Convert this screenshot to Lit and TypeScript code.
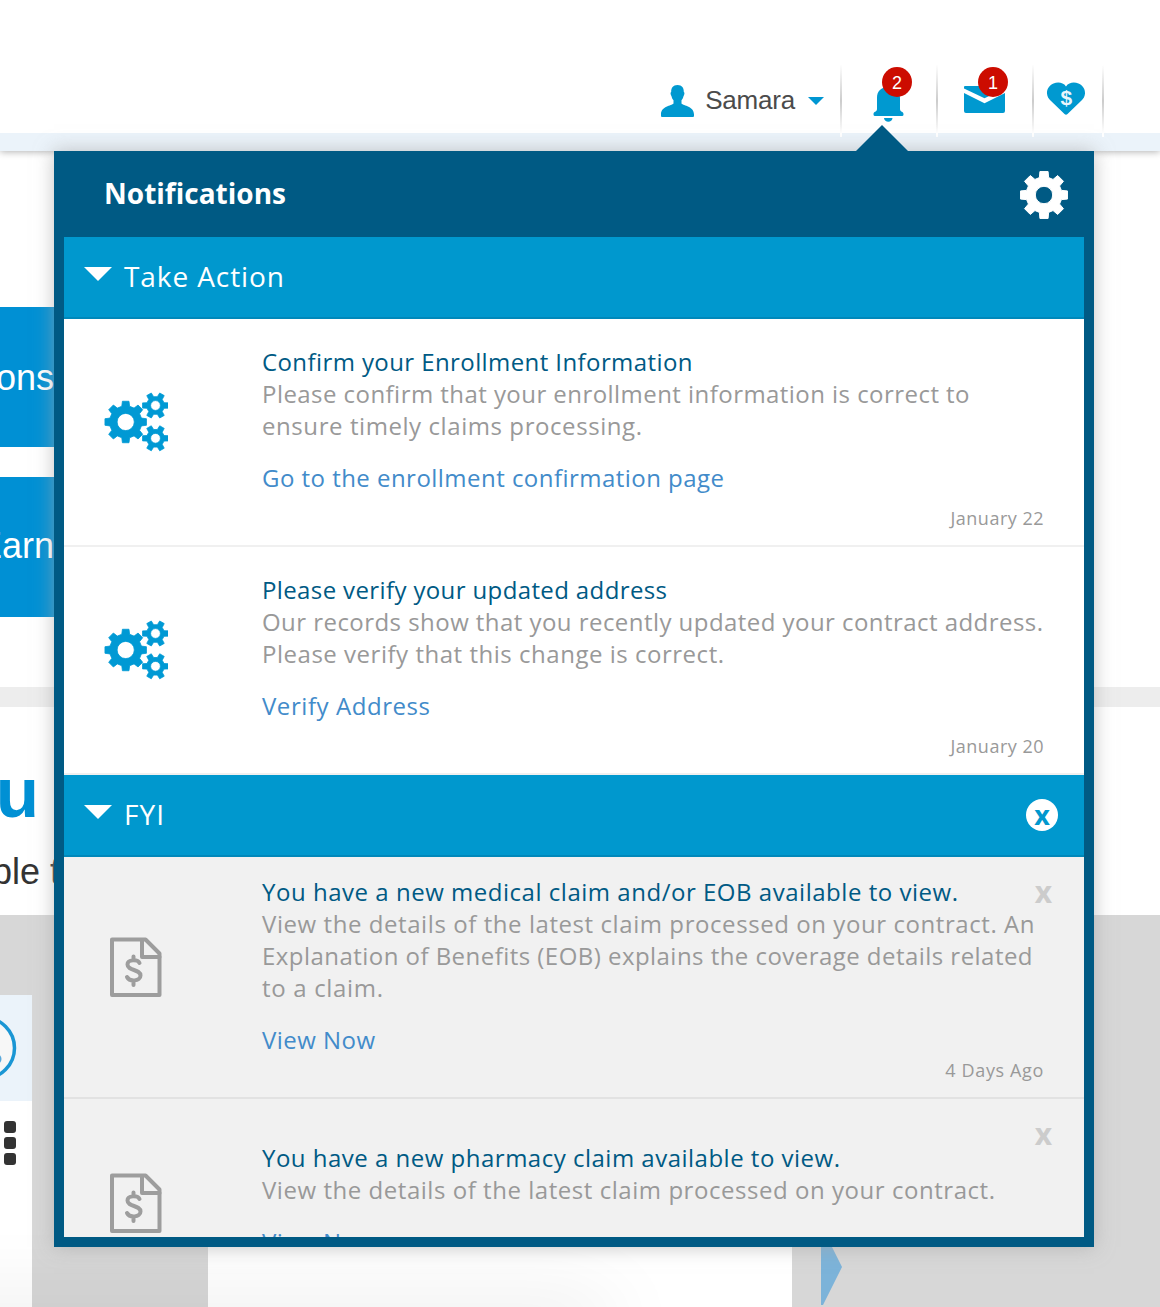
import { LitElement, html, css } from "lit";
import { customElement, property } from "lit/decorators.js";
import { styleMap } from "lit/directives/style-map.js";

const SANS = '"Open Sans", "Noto Sans", sans-serif';

const measurer = document.createElement("canvas").getContext("2d")!;

/** Letter spacing that makes `text` set in `font` as wide as `width`. */
function tracking(text: string, font: string, width: number) {
  measurer.font = font;
  const natural = measurer.measureText(text).width;
  return `${((width - natural) / (text.length - 1)).toFixed(3)}px`;
}

/** A gear outline with a round hole, drawn with the even-odd rule. */
function gear(cx: number, cy: number, outer: number, root: number, hole: number, teeth: number, tip = 0.24, base = 0.3) {
  const pts: string[] = [];
  const step = (Math.PI * 2) / teeth;
  const at = (r: number, a: number) => `${(cx + r * Math.cos(a)).toFixed(2)} ${(cy + r * Math.sin(a)).toFixed(2)}`;
  for (let i = 0; i < teeth; i++) {
    const a = i * step;
    pts.push(at(root, a - base * step), at(outer, a - tip * step), at(outer, a + tip * step), at(root, a + base * step));
  }
  return `M${pts.join("L")}ZM${cx - hole} ${cy}a${hole} ${hole} 0 1 0 ${hole * 2} 0a${hole} ${hole} 0 1 0 ${-hole * 2} 0Z`;
}

type Line = [text: string, width: number];

interface Notice {
  icon: "gears" | "claim";
  title: Line;
  body: Line[];
  link: Line;
  date: Line;
  variant: string;
  dismiss: boolean;
}

const ACTIONS: Notice[] = [
  {
    icon: "gears",
    title: ["Confirm your Enrollment Information", 430.5],
    body: [
      ["Please confirm that your enrollment information is correct to", 707.5],
      ["ensure timely claims processing.", 380],
    ],
    link: ["Go to the enrollment confirmation page", 462],
    date: ["January 22", 93],
    variant: "action",
    dismiss: false,
  },
  {
    icon: "gears",
    title: ["Please verify your updated address", 405],
    body: [
      ["Our records show that you recently updated your contract address.", 781],
      ["Please verify that this change is correct.", 462],
    ],
    link: ["Verify Address", 168],
    date: ["January 20", 93],
    variant: "action",
    dismiss: false,
  },
];

const FYI: Notice[] = [
  {
    icon: "claim",
    title: ["You have a new medical claim and/or EOB available to view.", 696],
    body: [
      ["View the details of the latest claim processed on your contract. An", 772.5],
      ["Explanation of Benefits (EOB) explains the coverage details related", 770.5],
      ["to a claim.", 121],
    ],
    link: ["View Now", 113],
    date: ["4 Days Ago", 98],
    variant: "fyi",
    dismiss: true,
  },
  {
    icon: "claim",
    title: ["You have a new pharmacy claim available to view.", 578],
    body: [["View the details of the latest claim processed on your contract.", 733]],
    link: ["View Now", 113],
    date: ["5 Days Ago", 98],
    variant: "fyi last",
    dismiss: true,
  },
];

@customElement("notice-item")
class NoticeItem extends LitElement {
  @property({ attribute: false }) notice!: Notice;

  static styles = css`
    :host { display: block; }
    .item {
      box-sizing: border-box;
      position: relative;
      display: grid;
      grid-template-columns: 198px 1fr;
      font-family: "Open Sans", "Noto Sans", sans-serif;
      font-size: 24px;
      line-height: 32px;
      border-bottom: 2px solid #f0f0f0;
    }
    .action { height: 228px; padding-top: 27px; background: #fff; }
    .fyi { height: 242px; padding-top: 19px; background: #f1f1f1; border-color: #e2e2e2; }
    .last { padding-top: 43px; }
    .icon { padding: 44px 0 0 38px; }
    .fyi .icon { padding: 60px 0 0 44px; }
    .last .icon { padding-top: 30px; }
    svg { display: block; }
    .line { white-space: nowrap; }
    .title { color: #005a84; }
    .body { color: #999; }
    .link { color: #428bca; margin-top: 20px; }
    .date { color: #999; font-size: 18px; line-height: 24px; margin-top: 12px; padding-right: 40px; text-align: right; white-space: nowrap; }
    .fyi .date { margin-top: 2px; }
    .close { position: absolute; top: 19px; right: 32px; color: #ccc; font-weight: 700; font-size: 30px; }
  `;

  private line([text, width]: Line, cls: string) {
    return html`<div class="line ${cls}" style=${styleMap({ letterSpacing: tracking(text, `24px ${SANS}`, width) })}>${text}</div>`;
  }

  private icon() {
    if (this.notice.icon === "gears") {
      return html`<svg width="66" height="64" viewBox="102 390 66 64">
        <g fill="#0099d4" fill-rule="evenodd" stroke="#0099d4" stroke-width="0.8" stroke-linejoin="round">
          <path d=${gear(125.7, 422, 21, 16.2, 8.6, 8, 0.2, 0.31)} />
          <path d=${gear(155.5, 405.5, 13.2, 9, 4.9, 6, 0.19, 0.3)} />
          <path d=${gear(155.5, 438.3, 13.2, 9, 4.9, 6, 0.19, 0.3)} />
        </g>
      </svg>`;
    }
    return html`<svg width="56" height="62" viewBox="108 936 56 62" fill="none" stroke="#9d9d9d" stroke-width="4" stroke-linejoin="round" stroke-linecap="round">
      <path d="M112 939.5h33.500l14 14V995H112Z" />
      <path d="M142 940v17h17.500" />
      <path d="M139.500 963c-1.500-3.500-12-4-12 1.500c0 6.500 13 4.500 13 11c0 6-11 6.500-13.500 1.500M133.500 956.500v3.500M133.500 981.500v3.500" />
    </svg>`;
  }

  render() {
    const n = this.notice;
    return html`<div class="item ${n.variant}">
      <div class="icon">${this.icon()}</div>
      <div>
        ${this.line(n.title, "title")}
        ${n.body.map((l) => this.line(l, "body"))}
        ${this.line(n.link, "link")}
        <div class="date" style=${styleMap({ letterSpacing: tracking(n.date[0], `18px ${SANS}`, n.date[1]) })}>${n.date[0]}</div>
      </div>
      ${n.dismiss ? html`<span class="close">x</span>` : ""}
    </div>`;
  }
}

@customElement("app-root")
class AppRoot extends LitElement {
  static styles = css`
    :host { display: block; }
    * { box-sizing: border-box; }
    .page {
      position: relative;
      height: 1307px;
      overflow: hidden;
      background: #fff;
      font-family: "Liberation Sans", Arial, sans-serif;
    }
    svg { display: block; }

    .top { height: 151px; background: linear-gradient(#fff 133px, #ebf3fa 133px); box-shadow: 0 1px 7px rgba(0, 0, 0, 0.3); padding: 65px 56px 0 0; display: flex; justify-content: flex-end; }
    .user { display: flex; height: 71px; align-items: center; }
    .name { font-size: 26px; letter-spacing: -0.2px; color: #4b4b4b; margin: 0 13px 0 11px; }
    .caret { border: 8px solid transparent; border-top-color: #0096d2; border-bottom: 0; margin-right: 16px; }
    .cell { position: relative; height: 72px; border-left: 2px solid; border-image: linear-gradient(#fff, #ccc 50%, #fff 94%) 1; }
    .end { height: 72px; width: 2px; background: linear-gradient(#fff, #ccc 50%, #fff 94%); }
    .badge { position: absolute; top: 2px; width: 30px; height: 30px; border-radius: 50%; background: #cc0c00; color: #fff; font-size: 18px; line-height: 32px; text-align: center; }
    .b-bell { left: 40px; }
    .b-mail { left: 40px; }

    .promo { display: flex; flex-direction: column; gap: 30px; padding-top: 156px; width: 54px; height: 536px; }
    .tile { height: 140px; background: #0090d4; color: #fff; font-size: 36px; display: flex; justify-content: flex-end; align-items: center; padding-top: 1px; }
    .tile.second { padding-bottom: 3px; }
    .rule { height: 20px; background: #ededed; }
    .intro { height: 208px; width: 70px; }
    .big { font-size: 71px; font-weight: 700; color: #0090d4; line-height: 84px; padding: 44px 31px 0 0; display: flex; justify-content: flex-end; }
    .sub { font-size: 36px; color: #333; line-height: 40px; padding-top: 17px; display: flex; justify-content: flex-end; white-space: pre; padding-right: 10px; }
    .gallery { height: 392px; background: #d7d7d7; display: flex; }
    .card { width: 32px; margin-top: 80px; background: #fff; }
    .card-head { height: 106px; background: #ebf3fa; }
    .dots { display: flex; flex-direction: column; gap: 4px; padding: 20px 0 0 4px; }
    .dot { width: 12px; height: 12px; border-radius: 3px; background: #333; }
    .panel { width: 584px; margin: 80px 29px 0 176px; background: #fff; }
    .next { padding-top: 314px; }
    .haze { position: absolute; left: -100px; width: 710px; bottom: -30px; height: 30px; box-shadow: 0 0 80px rgba(0, 0, 0, 0.13); }

    .popup {
      position: absolute;
      left: 54px;
      top: 151px;
      width: 1040px;
      height: 1096px;
      padding: 0 10px 10px;
      background: #005a84;
      box-shadow: 0 0 18px rgba(165, 165, 165, 0.65);
      display: flex;
      flex-direction: column;
      font-family: "Open Sans", "Noto Sans", sans-serif;
    }
    .pointer { position: absolute; left: 801px; top: -27px; }
    .head { height: 86px; flex: none; display: flex; align-items: center; justify-content: space-between; padding: 2px 15px 0 40px; color: #fff; font-size: 28px; font-weight: 700; white-space: nowrap; }
    .head-title { padding-bottom: 5px; }
    .list { flex: 1; min-height: 0; overflow: hidden; background: #f1f1f1; }
    .bar { height: 82px; background: #0098ce; border-bottom: 2px solid #0088ba; display: flex; align-items: center; color: #fff; font-size: 28px; padding: 0 26px 0 20px; white-space: nowrap; }
    .bar-title { padding-bottom: 2px; }
    .tri { border: 14px solid transparent; border-top-color: #fff; border-bottom: 0; margin: -6px 12px 0 0; }
    .round { margin-left: auto; width: 32px; height: 32px; border-radius: 50%; background: #fff; color: #0098ce; font-weight: 700; font-size: 27px; line-height: 31px; text-align: center; }
  `;

  private bar(title: string, width: number, close: boolean) {
    return html`<div class="bar">
      <span class="tri"></span>
      <span class="bar-title" style=${styleMap({ letterSpacing: tracking(title, `28px ${SANS}`, width) })}>${title}</span>
      ${close ? html`<span class="round">x</span>` : ""}
    </div>`;
  }

  render() {
    return html`<div class="page">
      <div class="top">
        <div class="user">
          <svg width="34" height="34" viewBox="661 84 34 34"><path fill="#0099d0" d="M678.500 85c4.500 0 6.500 3 6.300 7c.9.300.9 2.500-.3 4.200c-.4 2-1.300 3-2 4v3.300c2 2.500 12.500 2.500 12.500 11V116q0 1-1 1H663q-1 0-1-1v-1.500c0-8.500 10.500-8.500 12.500-11v-3.300c-.8-1-1.600-2-2-4c-1.200-1.700-1.200-3.900-.3-4.200c-.2-4 1.800-7 6.300-7Z" /></svg>
          <span class="name">Samara</span>
          <span class="caret"></span>
        </div>
        <div class="cell">
          <svg width="94" height="70" viewBox="842 65 94 70"><g fill="#0099d0"><path d="M877 98c0-7 4-11 11.500-11s11.500 4 11.500 11v11c0 3 3.500 2.500 3.500 5v.5q0 1.500-1.500 1.500H875q-1.500 0-1.500-1.500V114c0-2.500 3.500-2 3.500-5Z" /><path d="M884 118h8.500c-.3 2.500-2 3.800-4.200 3.800s-4-1.300-4.300-3.800Z" /></g></svg>
          <span class="badge b-bell">2</span>
        </div>
        <div class="cell">
          <svg width="94" height="70" viewBox="938 65 94 70"><g fill="#0099d0"><path d="M964 87q0-1 1-1h39q1 0 1 1v1.500L984.500 98.300L964 88.500Z" /><path d="M964 93l20.500 10.200L1005 93v18q0 2-2 2h-37q-2 0-2-2Z" /></g></svg>
          <span class="badge b-mail">1</span>
        </div>
        <div class="cell">
          <svg width="68" height="70" viewBox="1034 65 68 70"><path fill="#0099d0" d="M1066 86.500c3-4.500 8.500-4.500 12.500-3c4.500 1.800 6.800 6 6.500 10c-.2 3-1.500 5-3.500 7L1067.500 114q-1.500 1.500-3 0L1050.500 100.500c-2-2-3.300-4-3.500-7c-.3-4 2-8.200 6.500-10c4-1.500 9.500-1.500 12.500 3Z" /><text x="1066.300" y="104.800" text-anchor="middle" font-size="21" font-weight="700" fill="#ebf6fc">$</text></svg>
        </div>
        <div class="end"></div>
      </div>

      <div class="promo">
        <div class="tile">ons</div>
        <div class="tile second">Earn</div>
      </div>
      <div class="rule"></div>
      <div class="intro">
        <div class="big">u</div>
        <div class="sub">ble t</div>
      </div>
      <div class="gallery">
        <div class="card">
          <div class="card-head"><svg width="32" height="106" viewBox="0 995 32 106"><circle cx="-16" cy="1048" r="30.500" fill="#f7f7f7" stroke="#1a96d4" stroke-width="3.500" /><circle cx="-4" cy="1059" r="5.500" fill="#5aa9dc" /></svg></div>
          <div class="dots"><span class="dot"></span><span class="dot"></span><span class="dot"></span></div>
        </div>
        <div class="panel"></div>
        <div class="next"><svg width="22" height="78" viewBox="0 0 22 78"><path fill="#7cb3d9" d="M0 0h2l19 38L2 76H0Z" /></svg></div>
      </div>
      <div class="haze"></div>

      <div class="popup">
        <svg class="pointer" width="54" height="28" viewBox="0 0 54 28"><path fill="#005a84" d="M0 28L1 27L27 1L53 27V28Z" /></svg>
        <div class="head">
          <span class="head-title" style=${styleMap({ letterSpacing: tracking("Notifications", `700 28px ${SANS}`, 182) })}>Notifications</span>
          <svg width="50" height="50" viewBox="0 0 50 50"><path fill="#fff" fill-rule="evenodd" stroke="#fff" stroke-width="1" stroke-linejoin="round" d=${gear(25, 25, 23.8, 18, 8.7, 8, 0.22, 0.33)} /></svg>
        </div>
        <div class="list">
          ${this.bar("Take Action", 160, false)}
          ${ACTIONS.map((n) => html`<notice-item .notice=${n}></notice-item>`)}
          ${this.bar("FYI", 40, true)}
          ${FYI.map((n) => html`<notice-item .notice=${n}></notice-item>`)}
        </div>
      </div>
    </div>`;
  }
}
